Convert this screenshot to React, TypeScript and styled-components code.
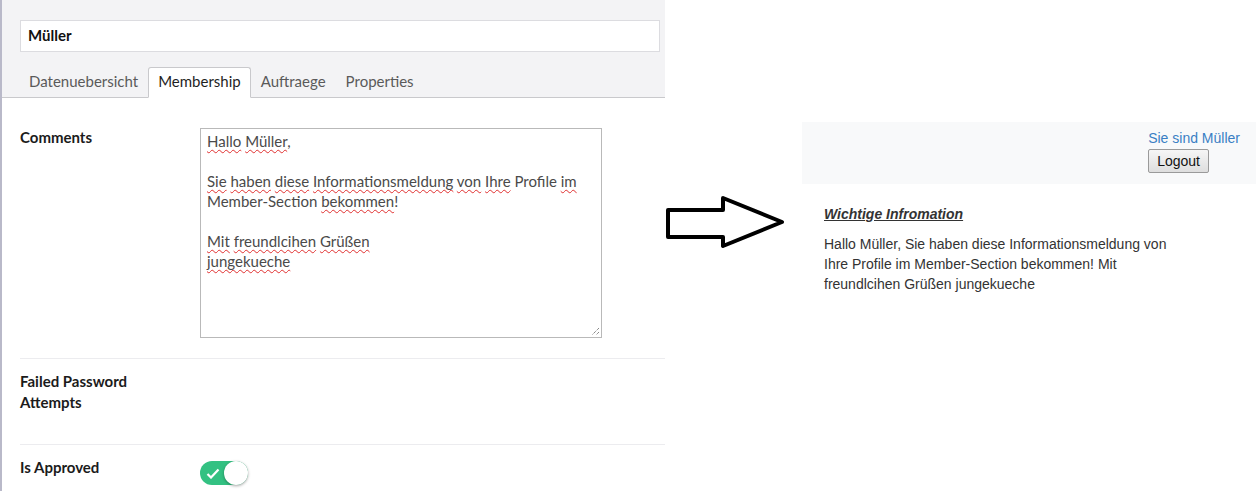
import React from "react";
import styled, { createGlobalStyle } from "styled-components";

const Global = createGlobalStyle`
  html, body { margin: 0; padding: 0; background: #ffffff; }
  body { width: 1256px; height: 491px; overflow: hidden; }
  * { box-sizing: border-box; }
`;

const Page = styled.div`
  display: flex;
  width: 1256px;
  height: 491px;
  background: #fff;
`;

const LeftPanel = styled.div`
  width: 665px;
  flex: none;
  border-left: 2px solid #b9b9c9;
  font-family: Lato, "Open Sans", sans-serif;
  display: flex;
  flex-direction: column;
`;

const Header = styled.div`
  background: #f3f3f5;
  border-bottom: 1px solid #c9c9cc;
  padding: 20px 5px 0 18px;
  display: flex;
  flex-direction: column;
  gap: 15px;
`;

const NameInput = styled.div`
  height: 32px;
  background: #fff;
  border: 1px solid #dcdce0;
  padding: 0 7px 2px;
  display: flex;
  align-items: center;
  font-size: 15px;
  font-weight: 700;
  color: #111;
`;

const Tabs = styled.div`
  display: flex;
  margin-left: -1px;
`;

const Tab = styled.div<{ $active?: boolean }>`
  height: 31px;
  margin-bottom: -1px;
  padding: 0 9px 3px;
  display: flex;
  align-items: center;
  font-size: 15px;
  color: ${(p) => (p.$active ? "#1f1f1f" : "#5a5a5a")};
  background: ${(p) => (p.$active ? "#ffffff" : "transparent")};
  border: 1px solid ${(p) => (p.$active ? "#c9c9cc" : "transparent")};
  border-bottom-color: ${(p) => (p.$active ? "#ffffff" : "transparent")};
  border-radius: 3px 3px 0 0;
`;

const Content = styled.div`
  padding: 17px 0 0 18px;
  display: flex;
  flex-direction: column;
`;

const Row = styled.div<{ $first?: boolean; $minHeight?: number }>`
  display: flex;
  padding: 13px 0 20px;
  border-top: ${(p) => (p.$first ? "none" : "1px solid #ececef")};
  min-height: ${(p) => (p.$minHeight ? `${p.$minHeight}px` : "auto")};
`;

const Label = styled.div`
  width: 180px;
  flex: none;
  font-size: 15px;
  font-weight: 700;
  line-height: 21px;
  color: #1b1b1b;
  padding-right: 40px;
  margin-top: -1px;
`;

const TextBox = styled.div`
  position: relative;
  width: 402px;
  height: 210px;
  border: 1px solid #b9b9b9;
  padding: 2px 6px;
  font-size: 15px;
  line-height: 20px;
  color: #4a4a4a;
  white-space: pre-wrap;
`;

const Typo = styled.span`
  text-decoration: underline wavy #e03030;
  text-decoration-thickness: 1px;
  text-underline-offset: 2px;
  text-decoration-skip-ink: none;
`;

const Grip = styled.svg`
  position: absolute;
  right: 1px;
  bottom: 1px;
`;

const Toggle = styled.div`
  width: 48px;
  height: 24px;
  border-radius: 12px;
  background: #33c182;
  display: flex;
  align-items: center;
  justify-content: space-between;
  padding-left: 6px;
  margin-top: 3px;
`;

const Knob = styled.div`
  width: 24px;
  height: 24px;
  border-radius: 50%;
  background: #fff;
  box-shadow: 0 1px 3px rgba(0, 0, 0, 0.35);
`;

const ArrowCol = styled.div`
  width: 137px;
  flex: none;
  padding-top: 195px;
`;

const RightCol = styled.div`
  flex: 1;
  padding-top: 122px;
  font-family: "Liberation Sans", Arial, sans-serif;
  display: flex;
  flex-direction: column;
`;

const TopBar = styled.div`
  background: #f8f9fa;
  height: 62px;
  padding: 8px 16px 0 0;
  display: flex;
  justify-content: flex-end;
`;

const UserBox = styled.div`
  display: flex;
  flex-direction: column;
  align-items: flex-start;
  gap: 3px;
`;

const UserLink = styled.a`
  font-size: 14px;
  line-height: 16px;
  color: #3a7fc4;
  text-decoration: none;
`;

const LogoutButton = styled.button`
  font-family: "Liberation Sans", Arial, sans-serif;
  font-size: 14px;
  height: 24px;
  padding: 0 8px;
  color: #111;
  border: 1px solid #9a9a9a;
  border-radius: 2px;
  background: linear-gradient(#f6f6f6, #dedede);
`;

const Notice = styled.div`
  padding: 22px 0 0 22px;
  color: #333;
`;

const NoticeTitle = styled.div`
  font-size: 14px;
  line-height: 16px;
  font-weight: 700;
  font-style: italic;
  text-decoration: underline;
`;

const NoticeText = styled.p`
  margin: 12px 0 0;
  width: 360px;
  font-size: 14px;
  line-height: 20px;
`;

export default function App() {
  return (
    <Page>
      <Global />
      <LeftPanel>
        <Header>
          <NameInput>Müller</NameInput>
          <Tabs>
            <Tab>Datenuebersicht</Tab>
            <Tab $active>Membership</Tab>
            <Tab>Auftraege</Tab>
            <Tab>Properties</Tab>
          </Tabs>
        </Header>
        <Content>
          <Row $first>
            <Label>Comments</Label>
            <TextBox role="textbox">
              <Typo>Hallo</Typo> <Typo>Müller</Typo>,{"\n\n"}
              <Typo>Sie</Typo> <Typo>haben</Typo> <Typo>diese</Typo>{" "}
              <Typo>Informationsmeldung</Typo> <Typo>von</Typo> <Typo>Ihre</Typo> Profile{" "}
              <Typo>im</Typo> Member-Section <Typo>bekommen</Typo>!{"\n\n"}
              <Typo>Mit</Typo> <Typo>freundlcihen</Typo> <Typo>Grüßen</Typo>
              {"\n"}
              <Typo>jungekueche</Typo>
              <Grip width="10" height="10" viewBox="0 0 10 10">
                <path d="M9 2 L2 9 M9 6 L6 9" stroke="#555" strokeWidth="1" strokeDasharray="1 1" />
              </Grip>
            </TextBox>
          </Row>
          <Row $minHeight={86}>
            <Label>Failed Password Attempts</Label>
          </Row>
          <Row>
            <Label>Is Approved</Label>
            <Toggle>
              <svg width="14" height="11" viewBox="0 0 14 11">
                <path d="M1.5 6 L5 9.5 L12.5 1.5" stroke="#fff" strokeWidth="2.2" fill="none" />
              </svg>
              <Knob />
            </Toggle>
          </Row>
        </Content>
      </LeftPanel>
      <ArrowCol>
        <svg width="122" height="58" viewBox="0 0 122 58">
          <path
            d="M3 15 L58 15 L58 3 L117 27 L58 51 L58 42 L3 42 Z"
            fill="#fff"
            stroke="#000"
            strokeWidth="4"
            strokeLinejoin="round"
          />
        </svg>
      </ArrowCol>
      <RightCol>
        <TopBar>
          <UserBox>
            <UserLink href="#">Sie sind Müller</UserLink>
            <LogoutButton>Logout</LogoutButton>
          </UserBox>
        </TopBar>
        <Notice>
          <NoticeTitle>Wichtige Infromation</NoticeTitle>
          <NoticeText>
            Hallo Müller, Sie haben diese Informationsmeldung von Ihre Profile im Member-Section bekommen! Mit
            freundlcihen Grüßen jungekueche
          </NoticeText>
        </Notice>
      </RightCol>
    </Page>
  );
}
